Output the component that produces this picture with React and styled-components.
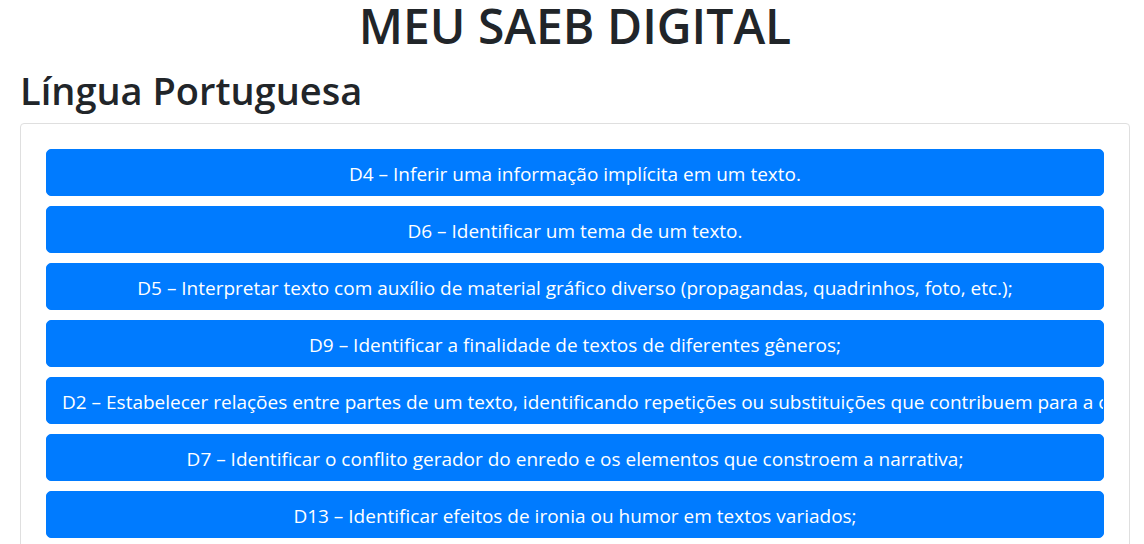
import React from "react";
import styled, { createGlobalStyle } from "styled-components";

const GlobalStyle = createGlobalStyle`
  *, *::before, *::after { box-sizing: border-box; }
  html { scrollbar-width: none; }
  body {
    margin: 0;
    background: #fff;
    color: #212529;
    font-family: "Segoe UI", "Open Sans", "Noto Sans", sans-serif;
  }
`;

const Page = styled.main`
  padding: 0 14px 0 20px;
`;

const Title = styled.h1`
  margin: 0 0 13px;
  font-size: 48px;
  font-weight: 600;
  line-height: 52px;
  text-align: center;
`;

const Subject = styled.h2`
  margin: 0 0 8px;
  font-size: 38px;
  font-weight: 600;
  line-height: 50px;
`;

const Card = styled.section`
  padding: 25px;
  border: 1px solid #dfdfdf;
  border-radius: 4px;
`;

const SkillList = styled.div`
  display: flex;
  flex-direction: column;
  gap: 10px;
`;

const SkillButton = styled.button`
  display: block;
  width: 100%;
  height: 47px;
  padding: 2px 15px 0;
  border: 1px solid #007bff;
  border-radius: 5px;
  background: #007bff;
  color: #fff;
  font-family: inherit;
  font-size: 19px;
  line-height: 30px;
  text-align: ${(p) => (p.$long ? "left" : "center")};
  white-space: nowrap;
  overflow: hidden;
  cursor: pointer;
`;

const skills = [
  { text: "D4 – Inferir uma informação implícita em um texto." },
  { text: "D6 – Identificar um tema de um texto." },
  { text: "D5 – Interpretar texto com auxílio de material gráfico diverso (propagandas, quadrinhos, foto, etc.);" },
  { text: "D9 – Identificar a finalidade de textos de diferentes gêneros;" },
  {
    text: "D2 – Estabelecer relações entre partes de um texto, identificando repetições ou substituições que contribuem para a continuidade de um texto;",
    long: true,
  },
  { text: "D7 – Identificar o conflito gerador do enredo e os elementos que constroem a narrativa;" },
  { text: "D13 – Identificar efeitos de ironia ou humor em textos variados;" },
];

export default function App() {
  return (
    <>
      <GlobalStyle />
      <Page>
        <Title>MEU SAEB DIGITAL</Title>
        <Subject>Língua Portuguesa</Subject>
        <Card>
          <SkillList>
            {skills.map((skill) => (
              <SkillButton key={skill.text} type="button" $long={skill.long}>
                {skill.text}
              </SkillButton>
            ))}
          </SkillList>
        </Card>
      </Page>
    </>
  );
}
